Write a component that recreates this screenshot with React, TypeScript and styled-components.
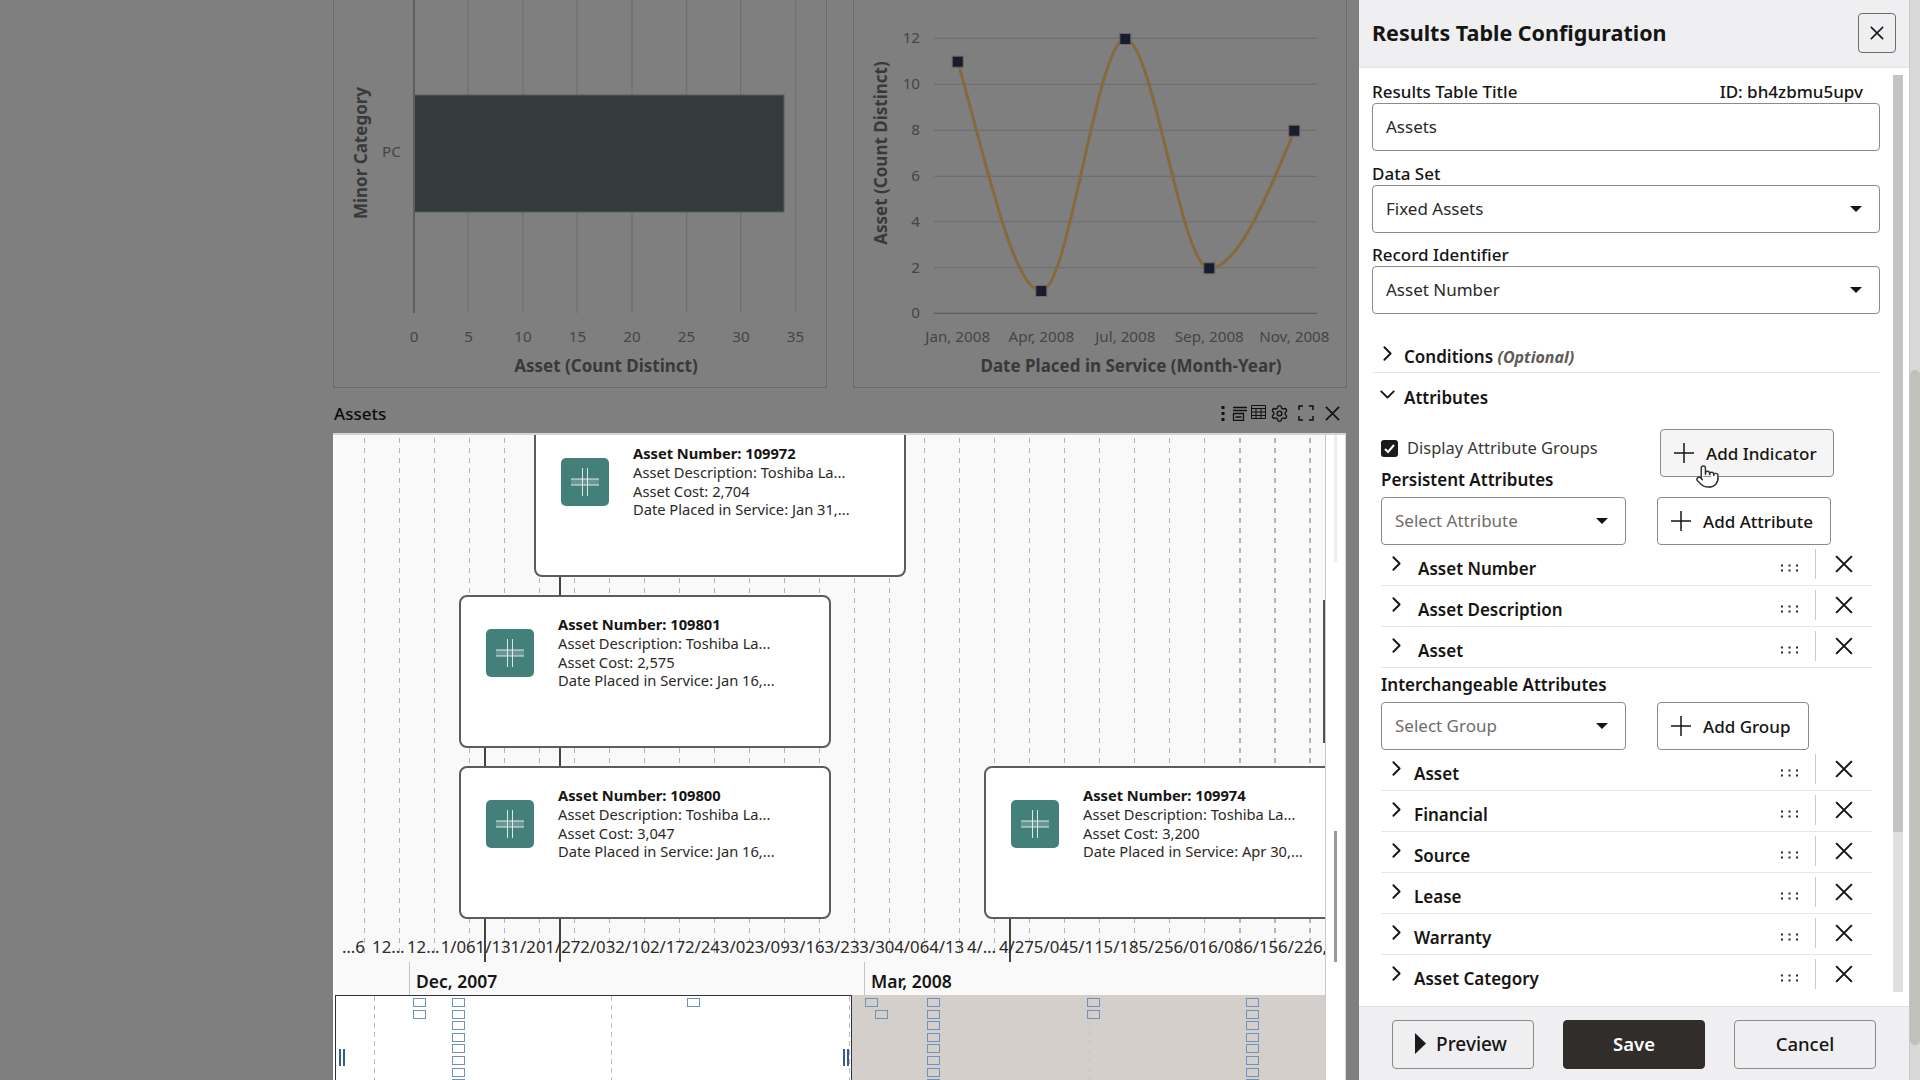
import React from 'react'
import styled, { createGlobalStyle } from 'styled-components'
import { ChevronDown, ChevronRight, Pointer, Settings } from 'lucide-react'

const GlobalStyle = createGlobalStyle`
    html, body {
        margin: 0;
        padding: 0;
        background: #7f7f7f;
    }
    * {
        box-sizing: border-box;
    }
    body {
        font-family: "Noto Sans", "Open Sans", sans-serif;
        color: #161513;
    }
`

const FONT = '"Noto Sans", "Open Sans", sans-serif'

const GRID_LINES = Array.from({ length: 28 }, (_, i) => 29 + i * 35)
const DATE_LABELS = [
    '…6', '12…', '12…', '1/06', '1/13', '1/20', '1/27', '2/03', '2/10', '2/17', '2/24', '3/02', '3/09', '3/16',
    '3/23', '3/30', '4/06', '4/13', '4/…', '4/27', '5/04', '5/11', '5/18', '5/25', '6/01', '6/08', '6/15', '6/22', '6,',
]
const NODES = [
    { left: 199, top: -11, number: '109972', cost: '2,704', date: 'Jan 31,...' },
    { left: 124, top: 160, number: '109801', cost: '2,575', date: 'Jan 16,...' },
    { left: 124, top: 331, number: '109800', cost: '3,047', date: 'Jan 16,...' },
    { left: 649, top: 331, number: '109974', cost: '3,200', date: 'Apr 30,...' },
]
const CONNECTORS = [
    { left: 224, top: 141, height: 386 },
    { left: 149, top: 312, height: 215 },
    { left: 674, top: 483, height: 44 },
]
const FULL_COLUMN = [0, 1, 2, 3, 4, 5, 6, 7]
const MARKERS = [
    ...[0, 1].map((row) => ({ x: 78, row })),
    ...FULL_COLUMN.map((row) => ({ x: 117, row })),
    { x: 352, row: 0 },
    { x: 530, row: 0 },
    { x: 540, row: 1 },
    ...FULL_COLUMN.map((row) => ({ x: 592, row })),
    ...[0, 1].map((row) => ({ x: 752, row })),
    ...FULL_COLUMN.map((row) => ({ x: 911, row })),
]
const PERSISTENT = ['Asset Number', 'Asset Description', 'Asset']
const INTERCHANGEABLE = ['Asset', 'Financial', 'Source', 'Lease', 'Warranty', 'Asset Category']

const App: React.FC = () => {
    return (
        <Page>
            <GlobalStyle />
            <Main>
                <ChartRow>
                    <ChartCard>
                        <BarChart />
                    </ChartCard>
                    <ChartCard>
                        <LineChart />
                    </ChartCard>
                </ChartRow>
                <PanelHeader>
                    <PanelTitle>Assets</PanelTitle>
                    <PanelTools />
                </PanelHeader>
                <TimelinePanel>
                    <TimelineCanvas>
                        <Plot>
                            {GRID_LINES.map((x, i) => (
                                <GridLine key={x} $x={x} $thick={i >= 25} />
                            ))}
                            {CONNECTORS.map((c) => (
                                <Connector key={c.left} $left={c.left} $top={c.top} $height={c.height} />
                            ))}
                            {NODES.map((n) => (
                                <NodeCard key={n.number} $left={n.left} $top={n.top}>
                                    <NodeIcon>
                                        <CrossGlyph />
                                    </NodeIcon>
                                    <NodeText>
                                        <NodeTitle>Asset Number: {n.number}</NodeTitle>
                                        <NodeLine>Asset Description: Toshiba La...</NodeLine>
                                        <NodeLine>Asset Cost: {n.cost}</NodeLine>
                                        <NodeLine>Date Placed in Service: {n.date}</NodeLine>
                                    </NodeText>
                                </NodeCard>
                            ))}
                            <EdgeBar />
                            <DateRow>
                                {DATE_LABELS.map((label, i) => (
                                    <DateCell key={i}>{label}</DateCell>
                                ))}
                            </DateRow>
                        </Plot>
                        <MonthAxis>
                            <MonthCell $width={455}>Dec, 2007</MonthCell>
                            <MonthCell $width={455}>Mar, 2008</MonthCell>
                        </MonthAxis>
                        <Overview>
                            <OverviewWindow>
                                <OverviewDash $x={38} />
                                <OverviewDash $x={275} />
                                <OverviewDash $x={513} />
                                <Handle $x={3} />
                                <Handle $x={507} />
                            </OverviewWindow>
                            <OverviewDash $x={754} $faint />
                            {MARKERS.map((m, i) => (
                                <Marker key={i} $x={m.x} $row={m.row} />
                            ))}
                        </Overview>
                    </TimelineCanvas>
                    <PanelScroll>
                        <PanelScrollThumb />
                    </PanelScroll>
                </TimelinePanel>
            </Main>

            <Drawer>
                <DrawerHeader>
                    <DrawerTitle>Results Table Configuration</DrawerTitle>
                    <CloseButton aria-label="Close">
                        <CrossIcon size={14} weight={1.5} />
                    </CloseButton>
                </DrawerHeader>
                <DrawerBody>
                    <Form>
                        <LabelRow>
                            <FieldLabel>Results Table Title</FieldLabel>
                            <IdText>ID: bh4zbmu5upv</IdText>
                        </LabelRow>
                        <Field>Assets</Field>
                        <LabelRow $top={11}>
                            <FieldLabel>Data Set</FieldLabel>
                        </LabelRow>
                        <Field>
                            Fixed Assets
                            <Caret />
                        </Field>
                        <LabelRow $top={10}>
                            <FieldLabel>Record Identifier</FieldLabel>
                        </LabelRow>
                        <Field>
                            Asset Number
                            <Caret />
                        </Field>

                        <SectionRow $top={26} $divider>
                            <ChevronRight size={25} strokeWidth={1.8} />
                            <SectionName>
                                Conditions <Optional>(Optional)</Optional>
                            </SectionName>
                        </SectionRow>
                        <SectionRow $top={8}>
                            <ChevronDown size={25} strokeWidth={1.8} />
                            <SectionName>Attributes</SectionName>
                        </SectionRow>

                        <AttributeBlock>
                            <TopGrid>
                                <TopLeft>
                                    <CheckRow>
                                        <CheckBox>
                                            <svg width="13" height="13" viewBox="0 0 13 13" fill="none">
                                                <path d="M2 7l3 3 6-7" stroke="#fff" strokeWidth="2" />
                                            </svg>
                                        </CheckBox>
                                        <CheckLabel>Display Attribute Groups</CheckLabel>
                                    </CheckRow>
                                    <GroupTitle $top={1}>Persistent Attributes</GroupTitle>
                                </TopLeft>
                                <AddButton $hover>
                                    <PlusIcon />
                                    Add Indicator
                                </AddButton>
                                <HandCursor>
                                    <Pointer size={25} fill="#fff" stroke="#333" strokeWidth={1.4} />
                                </HandCursor>
                            </TopGrid>
                            <AddRow>
                                <SelectField>
                                    Select Attribute
                                    <Caret />
                                </SelectField>
                                <AddButton>
                                    <PlusIcon />
                                    Add Attribute
                                </AddButton>
                            </AddRow>
                            {PERSISTENT.map((name) => (
                                <AttributeRow key={name} name={name} indent={9} />
                            ))}
                            <GroupTitle $top={5}>Interchangeable Attributes</GroupTitle>
                            <AddRow>
                                <SelectField>
                                    Select Group
                                    <Caret />
                                </SelectField>
                                <AddButton $narrow>
                                    <PlusIcon />
                                    Add Group
                                </AddButton>
                            </AddRow>
                            {INTERCHANGEABLE.map((name, i) => (
                                <AttributeRow
                                    key={name}
                                    name={name}
                                    indent={5}
                                    last={i === INTERCHANGEABLE.length - 1}
                                />
                            ))}
                        </AttributeBlock>
                    </Form>
                    <DrawerScroll>
                        <DrawerScrollThumb />
                    </DrawerScroll>
                </DrawerBody>
                <DrawerFooter>
                    <FooterButton $shift>
                        <PlayGlyph />
                        Preview
                    </FooterButton>
                    <FooterButton $primary>Save</FooterButton>
                    <FooterButton>Cancel</FooterButton>
                </DrawerFooter>
            </Drawer>
            <PageScroll>
                <PageScrollThumb />
            </PageScroll>
        </Page>
    )
}

export default App

const AttributeRow: React.FC<{ name: string; indent: number; last?: boolean }> = ({ name, indent, last }) => (
    <AttrRow $last={last}>
        <AttrChevron>
            <ChevronRight size={25} strokeWidth={1.8} />
        </AttrChevron>
        <AttrName $indent={indent}>{name}</AttrName>
        <DragDots />
        <AttrDivider />
        <RemoveButton>
            <CrossIcon size={18} weight={2} />
        </RemoveButton>
    </AttrRow>
)

const CrossIcon: React.FC<{ size: number; weight: number }> = ({ size, weight }) => (
    <svg width={size} height={size} viewBox="0 0 16 16" fill="none" stroke="#161513" strokeWidth={weight * (16 / size)}>
        <path d="M1 1l14 14M15 1L1 15" />
    </svg>
)

const PlusIcon = () => (
    <svg width="20" height="20" viewBox="0 0 20 20" fill="none" stroke="#161513" strokeWidth="1.5">
        <path d="M10 0v20M0 10h20" />
    </svg>
)

const PlayGlyph = () => (
    <svg width="11" height="21" viewBox="0 0 11 21">
        <path d="M0 0l11 10.5L0 21z" fill="#1d1b19" />
    </svg>
)

const CrossGlyph = () => (
    <svg width="28" height="28" viewBox="0 0 28 28" fill="none" stroke="#ffffffd0" strokeWidth="1">
        <rect x="0" y="11" width="28" height="6" fill="#ffffff30" stroke="none" />
        <path d="M11.500 0v28M16.500 0v28M0 11h28M0 17h28" />
    </svg>
)

const DragDots = () => (
    <DotsSvg width="17" height="8" viewBox="0 0 17 8" fill="#2b2b2b">
        {[0, 7.5, 15].map((x) => (
            <g key={x}>
                <rect x={x} y="0.5" width="2" height="2" />
                <rect x={x} y="5.5" width="2" height="2" />
            </g>
        ))}
    </DotsSvg>
)

const PanelTools = () => (
    <ToolGroup>
        <DotsTool width="4" height="15" viewBox="0 0 4 15" fill="#111">
            <rect x="0.5" y="0" width="3" height="3" />
            <rect x="0.5" y="6" width="3" height="3" />
            <rect x="0.5" y="12" width="3" height="3" />
        </DotsTool>
        <svg width="16" height="15" viewBox="0 0 16 15" fill="none" stroke="#111" strokeWidth="1.3">
            <path d="M1 1.500h14M1 4.500h14" />
            <path d="M1.500 7.500h10v7h-10zM3.500 11h6" />
        </svg>
        <TableTool width="15" height="14" viewBox="0 0 15 14" fill="none" stroke="#111" strokeWidth="1">
            <path d="M.5.5h14v13H.5zM.5 3.500h14M.5 7h14M.5 10.500h14M5 3.500v10M10 3.500v10" />
        </TableTool>
        <GearTool size={19} strokeWidth={1.8} color="#111" />
        <FrameTool width="16" height="16" viewBox="0 0 16 16" fill="none" stroke="#111" strokeWidth="1.5">
            <path d="M1 5V1h4M11 1h4v4M15 11v4h-4M5 15H1v-4" />
        </FrameTool>
        <CloseTool>
            <CrossIcon size={15} weight={1.8} />
        </CloseTool>
    </ToolGroup>
)

const BarChart = () => {
    const grid = [135, 190, 244, 299, 353.700, 407.700, 462.700]
    const ticks = [0, 5, 10, 15, 20, 25, 30, 35]
    return (
        <ChartSvg viewBox="0 0 493 388">
            {grid.map((x) => (
                <line key={x} x1={x} x2={x} y1="0" y2="313" stroke="#6c6c6c" />
            ))}
            <rect x="81" y="95" width="370" height="117" fill="#343b3d" stroke="#5a5f60" />
            <line x1="81" x2="81" y1="0" y2="313" stroke="#5e5e5e" strokeWidth="2" />
            {ticks.map((t, i) => (
                <TickText key={t} x={81 + i * 54.500} y="342" textAnchor="middle">
                    {t}
                </TickText>
            ))}
            <TickText x="58.500" y="157" textAnchor="middle">
                PC
            </TickText>
            <AxisText x="273" y="371.500" textAnchor="middle">
                Asset (Count Distinct)
            </AxisText>
            <AxisText transform="translate(34 153) rotate(-90)" textAnchor="middle">
                Minor Category
            </AxisText>
        </ChartSvg>
    )
}

const LineChart = () => {
    const ys = [313.300, 267.700, 221.700, 176.300, 130.300, 84.300, 38.300]
    const points = [
        [104.700, 61.700],
        [188.300, 291],
        [272.300, 39],
        [356.300, 268.300],
        [441.300, 130.700],
    ]
    const labels = ['Jan, 2008', 'Apr, 2008', 'Jul, 2008', 'Sep, 2008', 'Nov, 2008']
    return (
        <ChartSvg viewBox="0 0 493 388">
            {ys.map((y, i) => (
                <g key={y}>
                    <line x1="81" x2="464" y1={y} y2={y} stroke={i === 0 ? '#555' : '#6c6c6c'} />
                    <TickText x="67" y={y + 5} textAnchor="end">
                        {i * 2}
                    </TickText>
                </g>
            ))}
            <path
                d="M104.700 61.700C133 160 160 291 188.300 291C216 291 244 39 272.300 39C300 39 328 268.300 356.300 268.300C384 268.300 413 200 441.300 130.700"
                fill="none"
                stroke="#876a3c"
                strokeWidth="3"
            />
            {points.map(([x, y]) => (
                <rect key={x} x={x - 5.500} y={y - 5.500} width="11" height="11" fill="#181c2c" stroke="#6a6a6a" />
            ))}
            {labels.map((label, i) => (
                <TickText key={label} x={points[i][0]} y="342" textAnchor="middle">
                    {label}
                </TickText>
            ))}
            <AxisText x="278" y="371.500" textAnchor="middle">
                Date Placed in Service (Month-Year)
            </AxisText>
            <AxisText transform="translate(34 153) rotate(-90)" textAnchor="middle">
                Asset (Count Distinct)
            </AxisText>
        </ChartSvg>
    )
}

const Page = styled.div`
    width: 1920px;
    height: 1080px;
    display: flex;
    overflow: hidden;
    background: #7f7f7f;
`

const Main = styled.div`
    width: 1346px;
    padding-left: 333px;
    display: flex;
    flex-direction: column;
    flex-shrink: 0;
`

const ChartRow = styled.div`
    display: flex;
    gap: 26px;
    height: 388px;
`

const ChartCard = styled.div`
    width: 494px;
    height: 388px;
    border: 1px solid #6a6a6a;
    border-top: none;
`

const ChartSvg = styled.svg`
    display: block;
    width: 493px;
    height: 388px;
    margin-left: -1px;
`

const TickText = styled.text`
    font-family: ${FONT};
    font-size: 15.200px;
    fill: #454545;
`

const AxisText = styled.text`
    font-family: ${FONT};
    font-size: 17px;
    font-weight: 700;
    fill: #393939;
`

const PanelHeader = styled.div`
    height: 45px;
    display: flex;
    align-items: center;
    justify-content: space-between;
    padding-top: 5px;
`

const PanelTitle = styled.span`
    font-size: 17px;
    font-weight: 500;
    color: #0b0b0b;
    margin-left: 1px;
`

const ToolGroup = styled.div`
    display: flex;
    align-items: center;
    gap: 3px;
    margin-right: 6px;
`

const DotsTool = styled.svg`
    margin-right: 4px;
`

const TableTool = styled.svg`
    margin-top: -3px;
`

const GearTool = styled(Settings)`
    margin-left: 1px;
`

const FrameTool = styled.svg`
    margin-left: 6px;
`

const CloseTool = styled.div`
    display: flex;
    margin-left: 8px;
`

const TimelinePanel = styled.div`
    position: relative;
    flex: 1;
    display: flex;
    background: #fff;
    border-top: 2px solid #d8d3cf;
    padding-left: 2px;
    overflow: hidden;
`

const TimelineCanvas = styled.div`
    width: 991px;
    display: flex;
    flex-direction: column;
    background: #f9f9f9;
    border-right: 1px solid #ccc9c5;
`

const Plot = styled.div`
    position: relative;
    height: 527px;
    overflow: hidden;
`

const GridLine = styled.div<{ $x: number; $thick?: boolean }>`
    position: absolute;
    left: ${({ $x }) => $x}px;
    top: 3px;
    bottom: 5px;
    width: ${({ $thick }) => ($thick ? 2 : 1)}px;
    background: repeating-linear-gradient(to bottom, #b4b4b4 0 5px, transparent 5px 10px);
`

const Connector = styled.div<{ $left: number; $top: number; $height: number }>`
    position: absolute;
    left: ${({ $left }) => $left}px;
    top: ${({ $top }) => $top}px;
    height: ${({ $height }) => $height}px;
    width: 2px;
    background: #46433f;
`

const NodeCard = styled.div<{ $left: number; $top: number }>`
    position: absolute;
    left: ${({ $left }) => $left}px;
    top: ${({ $top }) => $top}px;
    width: 372px;
    height: 153px;
    display: flex;
    align-items: flex-start;
    padding: 32px 0 0 25px;
    background: #fff;
    border: 2px solid #5f5c58;
    border-radius: 8px;
`

const NodeIcon = styled.div`
    width: 48px;
    height: 48px;
    display: flex;
    align-items: center;
    justify-content: center;
    flex-shrink: 0;
    background: #44807a;
    border-radius: 5px;
`

const NodeText = styled.div`
    margin: -15px 0 0 24px;
    white-space: nowrap;
`

const NodeTitle = styled.div`
    font-size: 14.700px;
    font-weight: 700;
    line-height: 20px;
    color: #161513;
`

const NodeLine = styled.div`
    font-size: 14.700px;
    line-height: 18.500px;
    color: #2b2926;
`

const EdgeBar = styled.div`
    position: absolute;
    right: 0;
    top: 165px;
    height: 143px;
    width: 2px;
    background: #55524e;
`

const DateRow = styled.div`
    position: absolute;
    left: 1px;
    top: 502px;
    display: flex;
    white-space: nowrap;
`

const DateCell = styled.div`
    width: 34.900px;
    flex-shrink: 0;
    font-size: 16.800px;
    line-height: 20px;
    color: #2b2926;
    text-align: center;

    &:last-child {
        text-align: left;
    }
`

const MonthAxis = styled.div`
    height: 33px;
    display: flex;
    padding-left: 74px;
`

const MonthCell = styled.div<{ $width: number }>`
    width: ${({ $width }) => $width}px;
    border-left: 1px solid #c4c4c4;
    padding: 7px 0 0 6px;
    font-size: 17.500px;
    font-weight: 600;
    line-height: 24px;
    color: #161513;
`

const Overview = styled.div`
    position: relative;
    flex: 1;
    background: #d4cfcb;
    overflow: hidden;
`

const OverviewWindow = styled.div`
    position: absolute;
    left: 0;
    top: 0;
    bottom: 0;
    width: 517px;
    background: #fff;
    border: 1px solid #333;
    border-bottom: none;
`

const OverviewDash = styled.div<{ $x: number; $faint?: boolean }>`
    position: absolute;
    left: ${({ $x }) => $x}px;
    top: 0;
    bottom: 0;
    width: 1px;
    background: repeating-linear-gradient(
        to bottom,
        ${({ $faint }) => ($faint ? '#c3c4cc' : '#bbbbc4')} 0 5px,
        transparent 5px 9px
    );
`

const Handle = styled.div<{ $x: number }>`
    position: absolute;
    left: ${({ $x }) => $x}px;
    top: 53px;
    width: 6px;
    height: 17px;
    border-left: 2px solid #2f5d94;
    border-right: 2px solid #2f5d94;
`

const Marker = styled.div<{ $x: number; $row: number }>`
    position: absolute;
    left: ${({ $x }) => $x}px;
    top: ${({ $row }) => 3 + $row * 11.600}px;
    width: 13px;
    height: 9px;
    border: 1px solid #6d92bd;
`

const PanelScroll = styled.div`
    flex: 1;
    display: flex;
    flex-direction: column;
    justify-content: flex-end;
    padding-left: 8px;
    border-right: 1px solid #d8d8d8;
`

const PanelScrollThumb = styled.div`
    width: 3px;
    height: 131px;
    margin-bottom: 118px;
    background: #9a9a9a;
    box-shadow: 0 -400px 0 0 #ededed;
`

const Drawer = styled.aside`
    width: 550px;
    margin-left: 13px;
    display: flex;
    flex-direction: column;
    flex-shrink: 0;
    background: #fff;
`

const DrawerHeader = styled.header`
    height: 68px;
    display: flex;
    align-items: center;
    justify-content: space-between;
    padding: 0 13px 1px 13px;
    background: #efeff1;
    border-bottom: 1px solid #e4e4e6;
`

const DrawerTitle = styled.h2`
    margin: 0 0 2px;
    font-size: 21.500px;
    font-weight: 700;
    color: #161513;
`

const CloseButton = styled.button`
    width: 38px;
    height: 40px;
    display: flex;
    align-items: center;
    justify-content: center;
    padding: 0;
    background: transparent;
    border: 1px solid #6f6c68;
    border-radius: 4px;
`

const DrawerBody = styled.div`
    flex: 1;
    display: flex;
    min-height: 0;
    overflow: hidden;
`

const Form = styled.div`
    width: 521px;
    padding: 12px 0 0 13px;
    flex-shrink: 0;
`

const LabelRow = styled.div<{ $top?: number }>`
    height: 23px;
    margin-top: ${({ $top }) => $top || 0}px;
    display: flex;
    align-items: center;
    justify-content: space-between;
    padding-right: 17px;
`

const FieldLabel = styled.span`
    font-size: 17px;
    font-weight: 500;
    color: #161513;
`

const IdText = styled.span`
    font-size: 17px;
    font-weight: 500;
    color: #161513;
`

const Field = styled.div`
    position: relative;
    height: 48px;
    display: flex;
    align-items: center;
    padding: 0 0 2px 13px;
    font-size: 17px;
    color: #2b2926;
    border: 1px solid #8c8986;
    border-radius: 4px;
    background: #fff;
`

const Caret = styled.span`
    position: absolute;
    right: 17px;
    top: 50%;
    margin-top: -3px;
    border-top: 6px solid #161513;
    border-left: 6px solid transparent;
    border-right: 6px solid transparent;
`

const SectionRow = styled.div<{ $top?: number; $divider?: boolean }>`
    height: ${({ $divider }) => ($divider ? 33 : 32)}px;
    margin-top: ${({ $top }) => $top || 0}px;
    display: flex;
    align-items: center;
    padding-left: 3px;
    gap: 4px;
    border-bottom: ${({ $divider }) => ($divider ? '1px solid #e6e6e6' : 'none')};

    svg {
        margin-top: -5px;
        color: #161513;
    }
`

const SectionName = styled.span`
    font-size: 17px;
    font-weight: 600;
    color: #161513;
`

const Optional = styled.em`
    font-size: 16px;
    font-weight: 700;
    color: #5f5c58;
`

const AttributeBlock = styled.div`
    margin: 16px 8px 0 9px;
`

const TopGrid = styled.div`
    position: relative;
    height: 62px;
    display: flex;
`

const TopLeft = styled.div`
    width: 279px;
    display: flex;
    flex-direction: column;
`

const CheckRow = styled.div`
    height: 38px;
    display: flex;
    align-items: center;
    gap: 9px;
`

const CheckBox = styled.span`
    width: 17px;
    height: 17px;
    display: flex;
    align-items: center;
    justify-content: center;
    background: #1d1b19;
    border-radius: 3px;
`

const CheckLabel = styled.span`
    margin-top: -2px;
    font-size: 16.500px;
    color: #3a3835;
`

const GroupTitle = styled.div<{ $top?: number }>`
    height: 23px;
    margin-top: ${({ $top }) => $top || 0}px;
    line-height: 23px;
    font-size: 17px;
    font-weight: 600;
    color: #161513;
`

const AddButton = styled.button<{ $hover?: boolean; $narrow?: boolean }>`
    width: ${({ $narrow }) => ($narrow ? 152 : 174)}px;
    height: 48px;
    display: flex;
    align-items: center;
    gap: 12px;
    padding: 0 0 0 13px;
    font-family: inherit;
    font-size: 17px;
    font-weight: 500;
    color: #161513;
    background: ${({ $hover }) => ($hover ? '#f5f5f5' : '#fff')};
    border: 1px solid #8c8986;
    border-radius: 4px;
`

const HandCursor = styled.div`
    position: absolute;
    left: 314px;
    top: 35px;
    display: flex;
`

const AddRow = styled.div`
    margin-top: 6px;
    display: flex;
    gap: 31px;
`

const SelectField = styled(Field)`
    width: 245px;
    color: #6f6d69;
`

const AttrRow = styled.div<{ $last?: boolean }>`
    position: relative;
    height: 41px;
    display: flex;
    align-items: center;
    border-bottom: 1px solid ${({ $last }) => ($last ? 'transparent' : '#e6e6e6')};
`

const AttrChevron = styled.span`
    display: flex;
    margin: -3px 0 0 3px;
    color: #161513;
`

const AttrName = styled.span<{ $indent: number }>`
    flex: 1;
    margin: 6px 0 0 ${({ $indent }) => $indent}px;
    font-size: 17px;
    font-weight: 600;
    color: #161513;
`

const DotsSvg = styled.svg`
    margin: 6px 17px 0 0;
`

const AttrDivider = styled.span`
    width: 1px;
    height: 30px;
    margin-top: -2px;
    background: #c9c9c9;
`

const RemoveButton = styled.span`
    width: 56px;
    display: flex;
    justify-content: center;
    margin: -3px 0 0 0;
`

const DrawerScroll = styled.div`
    width: 10px;
    margin: 7px 0 14px 13px;
    display: flex;
    background: #dfdfdd;
`

const DrawerScrollThumb = styled.div`
    width: 100%;
    height: 757px;
    background: #c4c4c2;
`

const DrawerFooter = styled.footer`
    height: 74px;
    display: flex;
    gap: 29px;
    padding: 13px 0 0 33px;
    background: #efeff1;
    border-top: 1px solid #e0e0e2;
`

const FooterButton = styled.button<{ $primary?: boolean; $shift?: boolean }>`
    width: 142px;
    height: 49px;
    display: flex;
    align-items: center;
    justify-content: center;
    gap: 10px;
    padding: 0 ${({ $shift }) => ($shift ? 4 : 0)}px 2px 0;
    font-family: inherit;
    font-size: ${({ $shift }) => ($shift ? 19 : 18.5)}px;
    font-weight: ${({ $primary }) => ($primary ? 600 : 500)};
    color: ${({ $primary }) => ($primary ? '#fff' : '#161513')};
    background: ${({ $primary }) => ($primary ? '#312d2a' : 'transparent')};
    border: 1px solid ${({ $primary }) => ($primary ? '#312d2a' : '#8c8986')};
    border-radius: 4px;
`

const PageScroll = styled.div`
    width: 11px;
    padding-top: 370px;
    background: #d8d8d6;
    border-left: 1px solid #c8c8c6;
`

const PageScrollThumb = styled.div`
    height: 675px;
    background: #c1c0bb;
    border-radius: 5px;
`
